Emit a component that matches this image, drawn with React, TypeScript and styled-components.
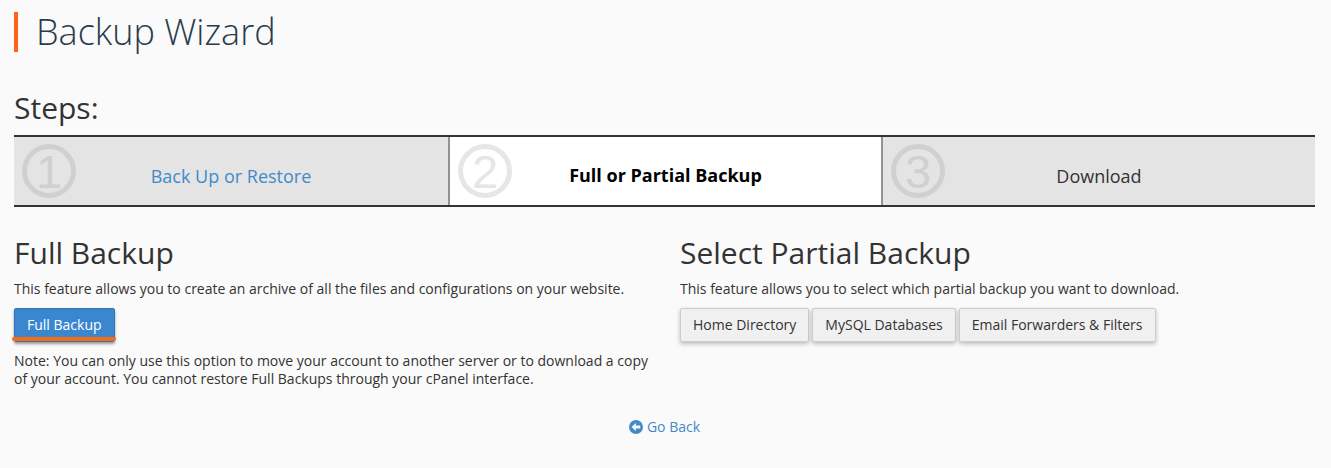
import React from 'react';
import styled, { createGlobalStyle } from 'styled-components';

const GlobalStyle = createGlobalStyle`
	html, body {
		margin: 0;
		padding: 0;
		background: #fafafa;
		font-family: 'Open Sans', 'Liberation Sans', sans-serif;
		font-size: 14px;
		line-height: 20px;
		color: #333;
	}
`;

const Page = styled.div`
	padding: 12px 16px 0 14px;
	height: 456px;
	overflow: hidden;
`;

const PageTitle = styled.h1`
	margin: 0;
	height: 40px;
	border-left: 4px solid #ff6319;
	padding-left: 18px;
	font-size: 36px;
	font-weight: 300;
	line-height: 40px;
	color: #293a4a;
`;

const StepsHeading = styled.h2`
	margin: 38px 0 0;
	font-size: 30px;
	font-weight: 400;
	line-height: 36px;
	color: #333;
`;

const StepsBar = styled.div`
	display: grid;
	grid-template-columns: 434px 433px 1fr;
	height: 72px;
	margin-top: 9px;
	box-sizing: border-box;
	border-top: 2px solid #333;
	border-bottom: 2px solid #333;
`;

const Step = styled.div<{ $active?: boolean; $first?: boolean }>`
	position: relative;
	display: flex;
	align-items: center;
	justify-content: center;
	box-sizing: border-box;
	background: ${(p) => (p.$active ? '#fff' : '#e4e4e4')};
	border-left: ${(p) => (p.$first ? '0' : '2px solid #929292')};
	font-size: 18px;
	font-weight: ${(p) => (p.$active ? 700 : 400)};
	color: ${(p) => (p.$active ? '#000' : '#333')};
	padding-top: ${(p) => (p.$active ? 8 : 10)}px;
`;

const StepNumber = styled.span<{ $active?: boolean }>`
	position: absolute;
	left: 8px;
	top: 7px;
	width: 54px;
	height: 54px;
	box-sizing: border-box;
	border: 5px solid ${(p) => (p.$active ? '#e6e6e6' : '#d0d0d0')};
	border-radius: 50%;
	display: flex;
	align-items: center;
	justify-content: center;
	font-family: 'Liberation Sans', sans-serif;
	font-size: 47px;
	font-weight: 400;
	line-height: 1;
	color: ${(p) => (p.$active ? '#e6e6e6' : '#d0d0d0')};
`;

const StepLink = styled.a`
	color: #428bca;
	text-decoration: none;
`;

const Columns = styled.div`
	display: grid;
	grid-template-columns: 666px 1fr;
	margin-top: 26px;
`;

const SectionTitle = styled.h2`
	margin: 0;
	font-size: 30px;
	font-weight: 400;
	line-height: 40px;
	color: #333;
`;

const Description = styled.p`
	margin: 6px 0 0;
`;

const ButtonRow = styled.div`
	display: flex;
	gap: 3px;
	margin-top: 9px;
`;

const PrimaryButton = styled.button`
	box-sizing: border-box;
	height: 34px;
	padding: 0 12px;
	font: inherit;
	color: #fff;
	background: #3a87cf;
	border: 1px solid #2f77b8;
	border-radius: 2px;
	box-shadow: 0 2px 3px rgba(0, 0, 0, 0.4);
	position: relative;

	&::after {
		content: '';
		position: absolute;
		left: -3px;
		right: -2px;
		bottom: 0;
		height: 4px;
		border-radius: 2px;
		background: #fb6a10;
	}
`;

const DefaultButton = styled.button`
	box-sizing: border-box;
	height: 34px;
	padding: 0 12px;
	font: inherit;
	color: #333;
	background: #f0f0f0;
	border: 1px solid #ccc;
	border-radius: 2px;
	box-shadow: 0 2px 4px rgba(0, 0, 0, 0.25);
`;

const Note = styled.p`
	margin: 10px 0 0;
	width: 645px;
	line-height: 18px;
`;

const BackRow = styled.div`
	display: flex;
	justify-content: center;
	margin-top: 29px;
`;

const BackLink = styled.a`
	display: flex;
	align-items: center;
	gap: 4px;
	color: #428bca;
	text-decoration: none;
`;

const BackIcon = () => (
	<svg width="14" height="14" viewBox="0 0 14 14" aria-hidden="true">
		<circle cx="7" cy="7" r="7" fill="#428bca" />
		<path d="M2.6 7 L6.8 3 L6.8 5.6 L11.2 5.6 L11.2 8.4 L6.8 8.4 L6.8 11 Z" fill="#fafafa" />
	</svg>
);

export default function App() {
	return (
		<>
			<GlobalStyle />
			<Page>
				<PageTitle>Backup Wizard</PageTitle>
				<StepsHeading>Steps:</StepsHeading>
				<StepsBar>
					<Step $first>
						<StepNumber>1</StepNumber>
						<StepLink href="#">Back Up or Restore</StepLink>
					</Step>
					<Step $active>
						<StepNumber $active>2</StepNumber>
						Full or Partial Backup
					</Step>
					<Step>
						<StepNumber>3</StepNumber>
						Download
					</Step>
				</StepsBar>
				<Columns>
					<div>
						<SectionTitle>Full Backup</SectionTitle>
						<Description>
							This feature allows you to create an archive of all the files and configurations on your website.
						</Description>
						<ButtonRow>
							<PrimaryButton>Full Backup</PrimaryButton>
						</ButtonRow>
						<Note>
							Note: You can only use this option to move your account to another server or to download a copy of your
							account. You cannot restore Full Backups through your cPanel interface.
						</Note>
					</div>
					<div>
						<SectionTitle>Select Partial Backup</SectionTitle>
						<Description>This feature allows you to select which partial backup you want to download.</Description>
						<ButtonRow>
							<DefaultButton>Home Directory</DefaultButton>
							<DefaultButton>MySQL Databases</DefaultButton>
							<DefaultButton>Email Forwarders &amp; Filters</DefaultButton>
						</ButtonRow>
					</div>
				</Columns>
				<BackRow>
					<BackLink href="#">
						<BackIcon />
						Go Back
					</BackLink>
				</BackRow>
			</Page>
		</>
	);
}
